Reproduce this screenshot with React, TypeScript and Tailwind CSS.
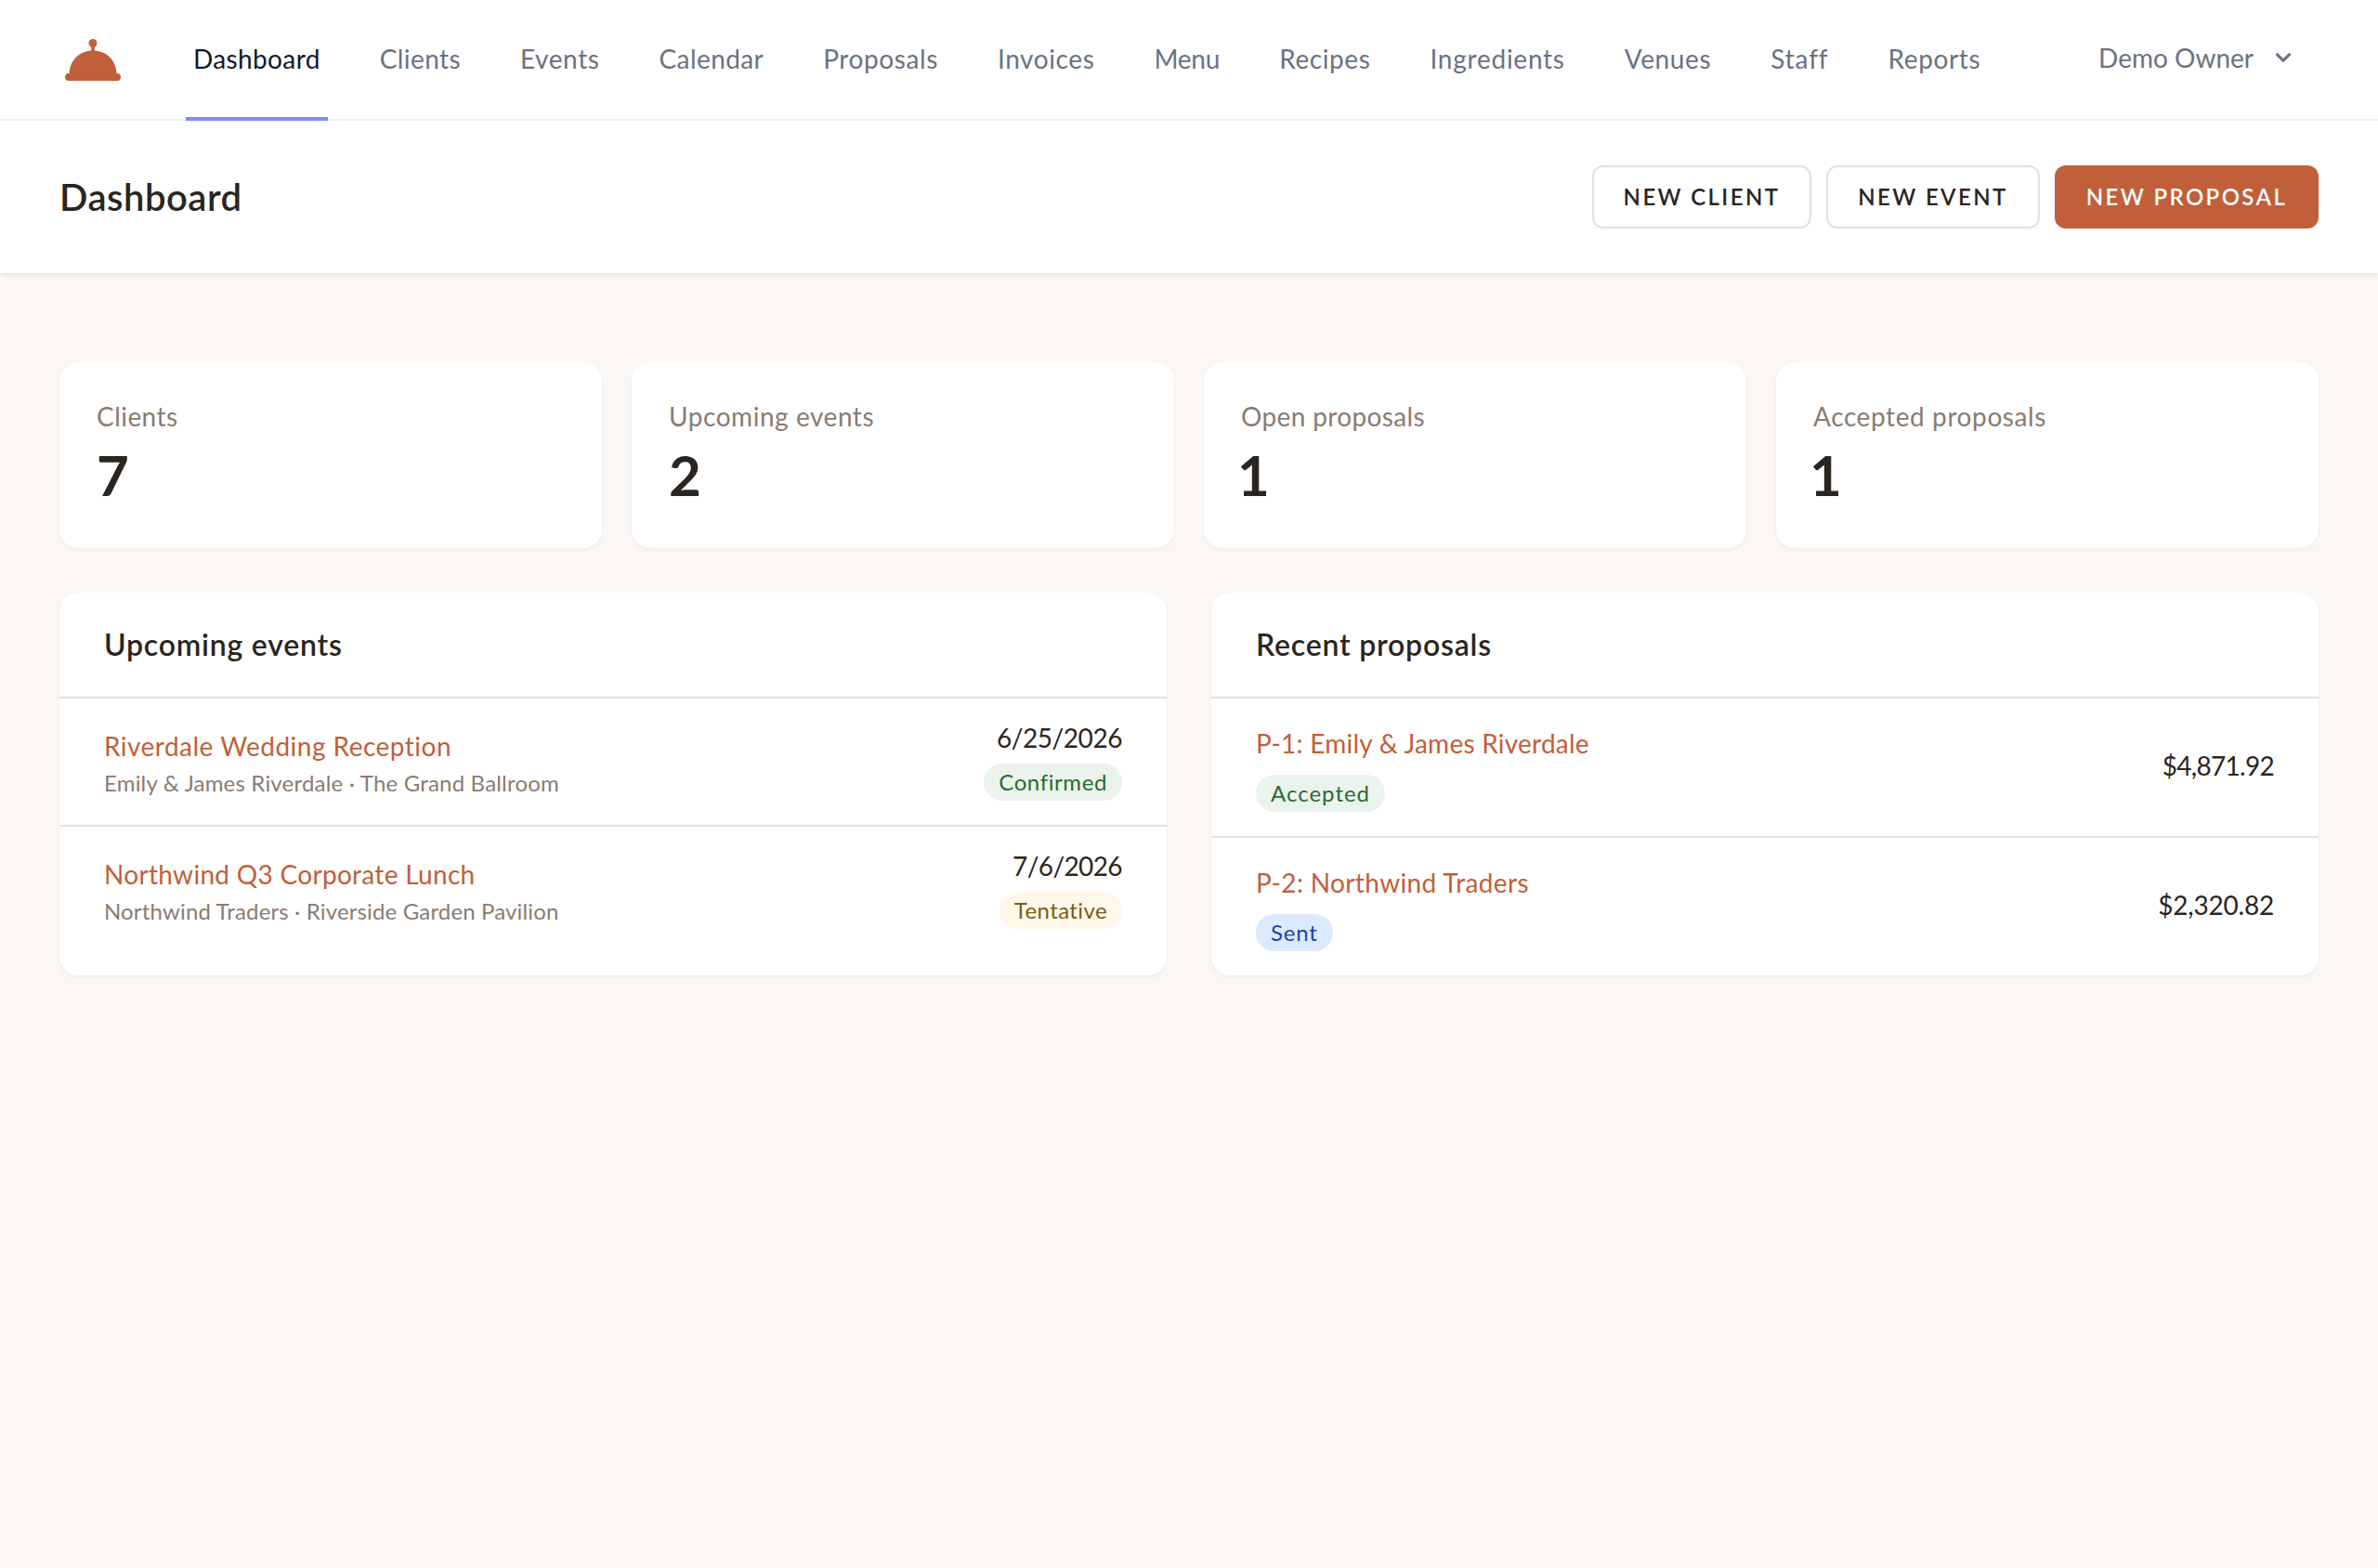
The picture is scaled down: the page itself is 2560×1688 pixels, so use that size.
const navItems = [
  { name: 'Dashboard', cls: 'border-[#818cf8] tracking-[0.37px] text-[#111827]' },
  { name: 'Clients', cls: 'border-transparent tracking-[0.4px] text-[#6b7280]' },
  { name: 'Events', cls: 'border-transparent tracking-[0.6px] text-[#6b7280]' },
  { name: 'Calendar', cls: 'border-transparent tracking-[0.4px] text-[#6b7280]' },
  { name: 'Proposals', cls: 'border-transparent tracking-[0.6px] text-[#6b7280]' },
  { name: 'Invoices', cls: 'border-transparent tracking-[0.6px] text-[#6b7280]' },
  { name: 'Menu', cls: 'border-transparent tracking-[-0.2px] text-[#6b7280]' },
  { name: 'Recipes', cls: 'border-transparent tracking-[0.6px] text-[#6b7280]' },
  { name: 'Ingredients', cls: 'border-transparent tracking-[0.75px] text-[#6b7280]' },
  { name: 'Venues', cls: 'border-transparent tracking-[0.6px] text-[#6b7280]' },
  { name: 'Staff', cls: 'border-transparent tracking-[0.9px] text-[#6b7280]' },
  { name: 'Reports', cls: 'border-transparent tracking-[0.6px] text-[#6b7280]' },
]

const stats = [
  { label: 'Clients', value: '7', cls: 'tracking-[0.45px]', num: '' },
  { label: 'Upcoming events', value: '2', cls: 'tracking-[0.55px]', num: '' },
  { label: 'Open proposals', value: '1', cls: 'tracking-[0.36px]', num: '-ml-[4px]' },
  { label: 'Accepted proposals', value: '1', cls: 'tracking-[0.6px]', num: '-ml-[4px]' },
]

const Logo = () => (
  <svg viewBox="0 0 60 45" className="h-[45px] w-[60px]" fill="#c05f3a">
    <circle cx="30" cy="4.5" r="4.5" />
    <rect x="28.2" y="6" width="3.6" height="8" />
    <path d="M4.5 38C5 22 16 12.5 30 12.5S55 22 55.500 38Z" />
    <rect x="0" y="37" width="60" height="8" rx="4" />
  </svg>
)

const Badge = ({ text, className }: { text: string; className: string }) => (
  <span className={`inline-block rounded-full px-4 py-1 text-[24px] leading-8 ${className}`}>{text}</span>
)

export default function App() {
  return (
    <div className="flex min-h-[1688px] flex-col bg-[#fbf7f4] font-['Lato',sans-serif] text-[#2b2520]">
      {/* Top nav */}
      <nav className="flex h-[130px] border-b-2 border-[#f3f4f6] bg-white pl-[70px] pr-[64px]">
        <div className="flex items-center">
          <Logo />
        </div>
        <div className="ml-[70px] flex gap-12">
          {navItems.map((item) => (
            <a key={item.name} className={`-mb-[2px] flex items-center border-b-4 px-2 text-[28px] ${item.cls}`}>
              {item.name}
            </a>
          ))}
        </div>
        <div className="ml-auto flex items-center gap-4 pb-1 pr-[22px] text-[28px] text-[#6b7280]">
          <span>Demo Owner</span>
          <svg viewBox="0 0 20 20" fill="currentColor" className="size-8">
            <path
              fillRule="evenodd"
              clipRule="evenodd"
              d="M5.293 7.293a1 1 0 011.414 0L10 10.586l3.293-3.293a1 1 0 111.414 1.414l-4 4a1 1 0 01-1.414 0l-4-4a1 1 0 010-1.414z"
            />
          </svg>
        </div>
      </nav>

      {/* Page header */}
      <header className="flex h-[164px] items-center justify-between bg-white px-16 shadow-[0_2px_6px_rgba(0,0,0,0.1)]">
        <h1 className="text-[40px] font-semibold tracking-[0.5px]">Dashboard</h1>
        <div className="flex gap-4">
          <button type="button" className="h-[68px] w-[236px] rounded-xl border-2 border-[#e7dfd8] bg-white text-[24px] font-semibold tracking-[0.1em]">NEW CLIENT</button>
          <button type="button" className="h-[68px] w-[230px] rounded-xl border-2 border-[#e7dfd8] bg-white text-[24px] font-semibold tracking-[0.1em]">NEW EVENT</button>
          <button type="button" className="h-[68px] w-[284px] rounded-xl bg-[#c05f3a] text-[24px] font-semibold tracking-[0.1em] text-white">NEW PROPOSAL</button>
        </div>
      </header>

      <main className="px-16 pt-24">
        {/* Stat cards */}
        <div className="grid grid-cols-4 gap-8">
          {stats.map((s) => (
            <div key={s.label} className="h-[200px] rounded-[20px] bg-white px-10 pt-[38px] shadow-[0_2px_4px_rgba(0,0,0,0.05)]">
              <div className={`text-[28px] leading-10 text-[#8a7b70] ${s.cls}`}>{s.label}</div>
              <div className={`mt-[7px] text-[60px] font-bold leading-[72px] ${s.num}`}>{s.value}</div>
            </div>
          ))}
        </div>

        <div className="mt-12 grid grid-cols-2 gap-12">
          {/* Upcoming events */}
          <section className="rounded-[20px] bg-white shadow-[0_2px_4px_rgba(0,0,0,0.05)]">
            <h2 className="border-b-2 border-[#e7dfd8] p-8 px-12 text-[32px] font-semibold leading-[48px] tracking-[0.78px]">Upcoming events</h2>
            <div className="flex items-center justify-between border-b-2 border-[#e7dfd8] px-12 pb-[26px] pt-6">
              <div>
                <div className="text-[28px] leading-[48px] tracking-[0.48px] text-[#c05f3a]">Riverdale Wedding Reception</div>
                <div className="text-[24px] leading-8 tracking-[0.19px] text-[#8a7b70]">Emily &amp; James Riverdale · The Grand Ballroom</div>
              </div>
              <div className="flex flex-col items-end gap-[10px]">
                <div className="text-[28px] leading-9 tracking-[-0.45px]">6/25/2026</div>
                <Badge text="Confirmed" className="bg-[#ebf4ec] tracking-[0.6px] text-[#2a6a30]" />
              </div>
            </div>
            <div className="flex items-center justify-between px-12 pb-[26px] pt-6">
              <div>
                <div className="text-[28px] leading-[48px] tracking-[0.3px] text-[#c05f3a]">Northwind Q3 Corporate Lunch</div>
                <div className="text-[24px] leading-8 tracking-[0.15px] text-[#8a7b70]">Northwind Traders · Riverside Garden Pavilion</div>
              </div>
              <div className="flex flex-col items-end gap-[10px]">
                <div className="text-[28px] leading-9 tracking-[-0.6px]">7/6/2026</div>
                <Badge text="Tentative" className="bg-[#fff8eb] tracking-[0.4px] text-[#7a5c12]" />
              </div>
            </div>
          </section>

          {/* Recent proposals */}
          <section className="rounded-[20px] bg-white shadow-[0_2px_4px_rgba(0,0,0,0.05)]">
            <h2 className="border-b-2 border-[#e7dfd8] p-8 px-12 text-[32px] font-semibold leading-[48px] tracking-[0.78px]">Recent proposals</h2>
            <div className="flex items-center justify-between border-b-2 border-[#e7dfd8] px-12 pb-[26px] pt-6">
              <div>
                <div className="mb-[10px] text-[28px] leading-[48px] tracking-[0.24px] text-[#c05f3a]">P-1: Emily &amp; James Riverdale</div>
                <Badge text="Accepted" className="bg-[#ebf4ec] tracking-[1px] text-[#2a6a30]" />
              </div>
              <div className="-mt-[2px] text-[28px] tracking-[-0.7px]">$4,871.92</div>
            </div>
            <div className="flex items-center justify-between px-12 pb-[26px] pt-6">
              <div>
                <div className="mb-[10px] text-[28px] leading-[48px] tracking-[0.36px] text-[#c05f3a]">P-2: Northwind Traders</div>
                <Badge text="Sent" className="bg-[#dbeafe] tracking-[0.8px] text-[#1e40af]" />
              </div>
              <div className="-mt-[2px] text-[28px] tracking-[-0.2px]">$2,320.82</div>
            </div>
          </section>
        </div>
      </main>
    </div>
  )
}
